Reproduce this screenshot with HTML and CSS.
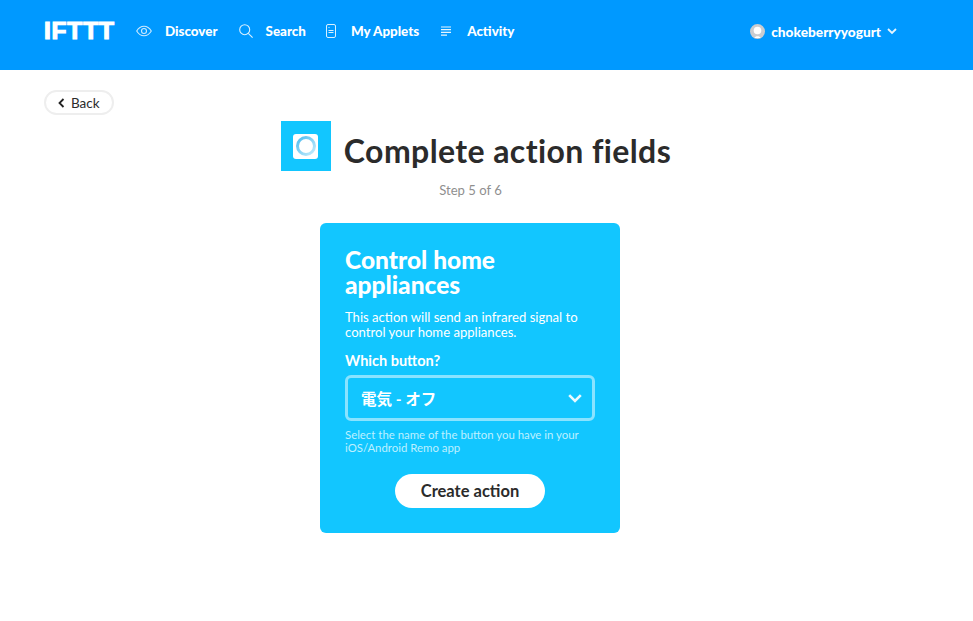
FILE: index.html
```html
<!DOCTYPE html>
<html lang="en">

<head>
    <meta charset="UTF-8">
    <meta name="viewport" content="width=device-width, initial-scale=1.0">
    <title>Complete action fields</title>
    <link rel="stylesheet" href="styles.css">
</head>

<body>
    <header class="topbar">
        <nav class="nav">
            <a class="logo">IFTTT</a>
            <a class="nav-item nav-discover">
                <svg width="16" height="12" viewBox="0 0 16 12" fill="none" stroke="#cdeaff" stroke-width="1.1">
                    <path d="M.7 6C2.6 2.8 5 1.2 8 1.2s5.400 1.600 7.300 4.800C13.400 9.200 11 10.800 8 10.800S2.600 9.200.7 6z" />
                    <circle cx="8" cy="6" r="2.500" />
                </svg>
                <span>Discover</span>
            </a>
            <a class="nav-item nav-search">
                <svg width="14" height="14" viewBox="0 0 14 14" fill="none" stroke="#d9f0ff" stroke-width="1.1">
                    <circle cx="5.700" cy="5.700" r="5" />
                    <path d="M9.300 9.300l4.300 4.300" />
                </svg>
                <span>Search</span>
            </a>
            <a class="nav-item nav-applets">
                <svg width="10" height="14" viewBox="0 0 10 14" fill="none" stroke="#d9f0ff" stroke-width="1">
                    <rect x=".5" y=".5" width="9" height="13" rx="1.500" />
                    <path d="M2.500 3.500h1M2.500 6.500h5M2.500 8.500h5" />
                </svg>
                <span>My Applets</span>
            </a>
            <a class="nav-item nav-activity">
                <svg width="11" height="11" viewBox="0 0 11 11" fill="none" stroke="#e6f5ff" stroke-width="1.200">
                    <path d="M0 1h10M0 3.700h10M0 6.400h10M0 9.200h6" />
                </svg>
                <span>Activity</span>
            </a>
        </nav>
        <a class="account">
            <svg class="avatar" width="15" height="15" viewBox="0 0 15 15">
                <circle cx="7.500" cy="7.500" r="7.500" fill="#c9ccd0" />
                <circle cx="7.500" cy="6.500" r="3.800" fill="#fff" />
                <path d="M4.500 14c.5-2.500 5.500-2.500 6 0z" fill="#fff" />
            </svg>
            <span>chokeberryyogurt</span>
            <svg width="10" height="7" viewBox="0 0 10 7" fill="none" stroke="#e6f5ff" stroke-width="1.800">
                <path d="M1 1l4 4 4-4" />
            </svg>
        </a>
    </header>

    <main class="content">
        <div class="back-row">
            <a class="back">
                <svg width="7" height="10" viewBox="0 0 7 10" fill="none" stroke="#222" stroke-width="1.800">
                    <path d="M5.500 1L1.500 5l4 4" />
                </svg>
                <span>Back</span>
            </a>
        </div>

        <div class="title-row">
            <div class="service-icon">
                <div class="service-inner">
                    <svg width="22" height="22" viewBox="0 0 22 22" fill="none">
                        <defs>
                            <linearGradient id="ringFade" x1="0" y1="0" x2="1" y2="1">
                                <stop offset="0" stop-color="#4fbdf0" />
                                <stop offset="1" stop-color="#c4ecfc" />
                            </linearGradient>
                        </defs>
                        <circle cx="11" cy="11" r="8.500" stroke="url(#ringFade)" stroke-width="3" />
                    </svg>
                </div>
            </div>
            <h1>Complete action fields</h1>
        </div>
        <p class="step">Step 5 of 6</p>

        <form class="card">
            <h2>Control home appliances</h2>
            <p class="card-desc">This action will send an infrared signal to control your home appliances.</p>
            <label class="field-label">Which button?</label>
            <div class="select">
                <span>電気 - オフ</span>
                <svg width="14" height="9" viewBox="0 0 14 9" fill="none" stroke="#e9faff" stroke-width="2.600">
                    <path d="M1.200 1.200L7 7l5.800-5.800" />
                </svg>
            </div>
            <p class="hint">Select the name of the button you have in your iOS/Android Remo app</p>
            <button class="submit" type="button">Create action</button>
        </form>
    </main>
</body>

</html>
```

FILE: styles.css
```css
body {
    font-family: Lato, "Noto Sans CJK JP", sans-serif;
    background-color: #fff;
    color: #2b2b2b;
    margin: 0;
}

.topbar {
    display: flex;
    justify-content: space-between;
    align-items: center;
    height: 70px;
    padding: 0 76px 8px 44px;
    box-sizing: border-box;
    background-color: #0099ff;
    color: #fff;
}

.nav {
    display: flex;
    align-items: center;
}

.logo {
    width: 70px;
    font-family: "Liberation Sans", sans-serif;
    font-size: 24.500px;
    font-weight: bold;
    letter-spacing: .8px;
    -webkit-text-stroke: 1.200px #fff;
}

.nav-item {
    display: flex;
    align-items: center;
    font-size: 13.400px;
    font-weight: 900;
}

.nav-discover {
    margin-left: 22px;
    gap: 13px;
}

.nav-search {
    margin-left: 21px;
    gap: 13px;
}

.nav-applets {
    margin-left: 20px;
    gap: 15px;
}

.nav-activity {
    margin-left: 22px;
    gap: 15px;
}

.account {
    display: flex;
    align-items: center;
    font-size: 13.700px;
    font-weight: 900;
    gap: 6px;
}

.content {
    padding: 20px 44px 0;
}

.back-row {
    display: flex;
}

.back {
    display: flex;
    align-items: center;
    gap: 6px;
    height: 21px;
    padding: 0 12px;
    border: 2px solid #eeeeee;
    border-radius: 14px;
    font-size: 13.500px;
}

.title-row {
    display: flex;
    align-items: center;
    justify-content: center;
    gap: 13px;
    margin-top: 6px;
    margin-right: 21px;
}

.service-icon {
    display: flex;
    align-items: center;
    justify-content: center;
    width: 50px;
    height: 50px;
    background-color: #12c6ff;
}

.service-inner {
    display: flex;
    align-items: center;
    justify-content: center;
    width: 25px;
    height: 25px;
    border-radius: 3px;
    background-color: #fff;
}

h1 {
    margin: 8px 0 0;
    font-size: 32px;
    font-weight: 700;
    letter-spacing: .4px;
}

.step {
    margin: 11px 32px 0 0;
    color: #8f8f8f;
    font-size: 13.100px;
    text-align: center;
}

.card {
    display: flex;
    flex-direction: column;
    box-sizing: border-box;
    width: 300px;
    height: 310px;
    margin: 25px 0 0 276px;
    padding: 24px 25px 25px;
    border-radius: 6px;
    background-color: #12c6ff;
    color: #fff;
}

h2 {
    margin: 0;
    font-size: 24.500px;
    font-weight: 900;
    line-height: 25px;
}

.card-desc {
    margin: 13px 0 0;
    font-size: 13.100px;
    line-height: 15px;
}

.field-label {
    margin-top: 12px;
    font-size: 14.500px;
    font-weight: 700;
}

.select {
    display: flex;
    align-items: center;
    justify-content: space-between;
    box-sizing: border-box;
    height: 46px;
    margin-top: 6px;
    padding: 0 10px 0 13px;
    border: 3.500px solid #8ae3ff;
    border-radius: 6px;
    font-size: 15.500px;
    font-weight: 700;
}

.hint {
    margin: 7px 0 0;
    color: #bdf0ff;
    font-size: 11.400px;
    line-height: 13px;
}

.submit {
    align-self: center;
    width: 150px;
    height: 34px;
    margin-top: 20px;
    border: none;
    border-radius: 17px;
    background-color: #fff;
    color: #2b2b2b;
    font-family: inherit;
    font-size: 16.500px;
    font-weight: 700;
}
```
